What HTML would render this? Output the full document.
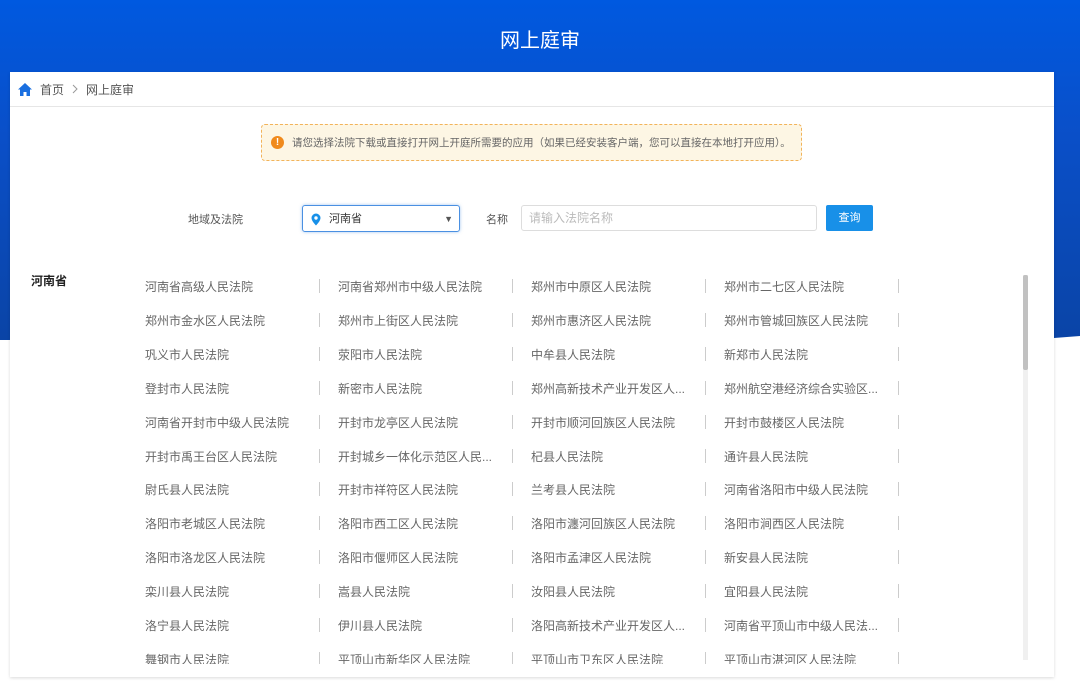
<!DOCTYPE html>
<html><head><meta charset="utf-8"><style>
*{margin:0;padding:0;box-sizing:border-box}
body{width:1080px;height:689px;overflow:hidden;background:#fff;font-family:"Liberation Sans","Noto Sans CJK SC",sans-serif;position:relative}
.bg{position:absolute;left:0;top:0;width:1080px;height:340px;background:linear-gradient(180deg,#0059e0 0%,#0a4fc8 40%,#0a44a6 100%);clip-path:polygon(0 0,100% 0,100% 336px,1054px 338px,0 340px)}
.title{position:absolute;top:24px;left:0;width:1080px;text-align:center;color:#fff;font-size:20px}
.card{position:absolute;left:10px;top:72px;width:1044px;height:605px;background:#fff;box-shadow:0 1px 3px rgba(0,0,0,.15);overflow:hidden}
.bc{height:35px;border-bottom:1px solid #e6e6e6;font-size:12px;color:#555;display:flex;align-items:center;padding-left:8px}
.bc span{margin-left:8px}
.alert{position:absolute;left:251px;top:52px;width:541px;height:37px;background:#fdf6e4;border:1px dashed #f2b35a;border-radius:4px;font-size:10.5px;color:#666;display:flex;align-items:center;padding-left:30px}
.alert i{position:absolute;left:9px;top:11px;width:13px;height:13px;border-radius:50%;background:#f08a1c;color:#fff;font-size:10px;font-style:normal;text-align:center;line-height:13px;font-weight:bold}
.lbl{position:absolute;font-size:11px;color:#555}
.sel{position:absolute;left:292px;top:133px;width:158px;height:27px;border:1px solid #4a90e2;border-radius:3px;box-shadow:0 0 3px rgba(74,144,226,.5);font-size:11px;color:#333;padding-left:26px;line-height:27px}
.inp{position:absolute;left:511px;top:133px;width:296px;height:26px;border:1px solid #ddd;border-radius:3px;font-size:12px;color:#bbb;padding-left:7px;line-height:24px}
.btn{position:absolute;left:816px;top:133px;width:47px;height:26px;background:#1890e8;border-radius:2px;color:#fff;font-size:11px;text-align:center;line-height:26px}
.prov{position:absolute;left:21px;top:200px;font-size:12px;font-weight:bold;color:#222}
.it{position:absolute;font-size:12px;color:#666;white-space:nowrap}
.dv{position:absolute;width:1px;height:14px;background:#ccc}
.sb{position:absolute;left:1013px;top:203px;width:5px;height:385px;background:#f0f0f0}
.sb div{width:5px;height:95px;background:#c1c1c1;border-radius:2px}
</style></head><body>
<div class="bg"></div>
<div class="title">网上庭审</div>
<div class="card">
<div class="bc"><svg width="14" height="13" viewBox="0 0 14 13"><path d="M7 0L0 6.5h2V13h3.5V9h3v4H12V6.5h2z" fill="#1a6fe0"/></svg><span>首页</span><svg style="margin-left:8px" width="6" height="10" viewBox="0 0 6 10"><path d="M1 1l4 4-4 4" fill="none" stroke="#999" stroke-width="1"/></svg><span>网上庭审</span></div>
<div class="alert"><i>!</i>请您选择法院下载或直接打开网上开庭所需要的应用（如果已经安装客户端，您可以直接在本地打开应用）。</div>
<div class="lbl" style="left:178px;top:139px">地域及法院</div>
<div class="sel"><svg style="position:absolute;left:8px;top:7px" width="10" height="13" viewBox="0 0 10 13"><path d="M5 0.5A4.5 4.5 0 0 0 .5 5C.5 8 5 12.5 5 12.5S9.5 8 9.5 5A4.5 4.5 0 0 0 5 .5z" fill="#1890e8"/><circle cx="5" cy="5" r="1.7" fill="#fff"/></svg>河南省<span style="position:absolute;right:6px;top:0;color:#555;font-size:9px">▼</span></div>
<div class="lbl" style="left:476px;top:139px">名称</div>
<div class="inp">请输入法院名称</div>
<div class="btn">查询</div>
<div class="prov">河南省</div>
<div id="list"></div>
<div class="sb"><div></div></div>
</div>
<script>
var d=[["河南省高级人民法院","河南省郑州市中级人民法院","郑州市中原区人民法院","郑州市二七区人民法院"],
["郑州市金水区人民法院","郑州市上街区人民法院","郑州市惠济区人民法院","郑州市管城回族区人民法院"],
["巩义市人民法院","荥阳市人民法院","中牟县人民法院","新郑市人民法院"],
["登封市人民法院","新密市人民法院","郑州高新技术产业开发区人...","郑州航空港经济综合实验区..."],
["河南省开封市中级人民法院","开封市龙亭区人民法院","开封市顺河回族区人民法院","开封市鼓楼区人民法院"],
["开封市禹王台区人民法院","开封城乡一体化示范区人民...","杞县人民法院","通许县人民法院"],
["尉氏县人民法院","开封市祥符区人民法院","兰考县人民法院","河南省洛阳市中级人民法院"],
["洛阳市老城区人民法院","洛阳市西工区人民法院","洛阳市瀍河回族区人民法院","洛阳市涧西区人民法院"],
["洛阳市洛龙区人民法院","洛阳市偃师区人民法院","洛阳市孟津区人民法院","新安县人民法院"],
["栾川县人民法院","嵩县人民法院","汝阳县人民法院","宜阳县人民法院"],
["洛宁县人民法院","伊川县人民法院","洛阳高新技术产业开发区人...","河南省平顶山市中级人民法..."],
["舞钢市人民法院","平顶山市新华区人民法院","平顶山市卫东区人民法院","平顶山市湛河区人民法院"]];
var h="";for(var r=0;r<d.length;r++){var y=206+r*33.9;for(var c=0;c<4;c++){h+='<div class="it" style="left:'+(135+c*193)+'px;top:'+y+'px">'+d[r][c]+'</div><div class="dv" style="left:'+(309+c*193)+'px;top:'+(y+1)+'px"></div>';}}
document.getElementById("list").innerHTML='<div style="position:absolute;left:0;top:0;width:1010px;height:592px;overflow:hidden">'+h+'</div>';
</script>
</body></html>
